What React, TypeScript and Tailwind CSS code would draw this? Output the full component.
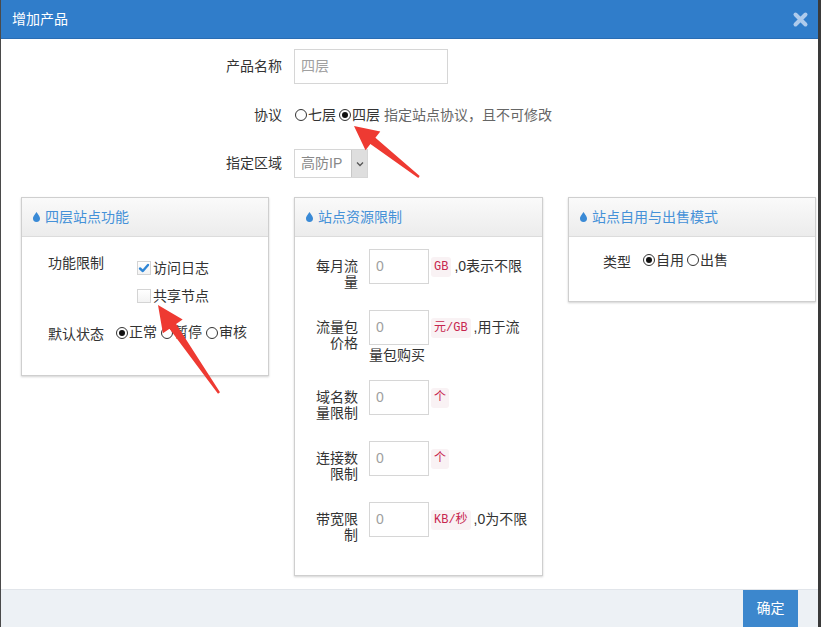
import React from "react";

const Drop = () => (
  <svg width="7" height="10" viewBox="0 0 10 14" className="shrink-0">
    <path d="M5 0 C4 2 0 6 0 9.2 a5 4.8 0 0 0 10 0 C10 6 6 2 5 0Z" fill="#3a8ad6" />
  </svg>
);

const Radio = ({ checked, label }: { checked?: boolean; label: string }) => (
  <span className="inline-flex items-center">
    <span className="w-[12px] h-[12px] rounded-full border border-[#333] bg-white flex items-center justify-center mr-[1px]">
      {checked && <span className="w-[6px] h-[6px] rounded-full bg-[#111]" />}
    </span>
    <span>{label}</span>
  </span>
);

const Check = ({ checked, label }: { checked?: boolean; label: string }) => (
  <div className="flex items-center h-[20px]">
    <span className="w-[14px] h-[14px] border border-[#d4d4d4] bg-gradient-to-b from-white to-[#f3f3f3] flex items-center justify-center mr-[2px]">
      {checked && (
        <svg width="12" height="12" viewBox="0 0 12 12">
          <path d="M2 6.5 L4.8 9 L10 3" stroke="#2f86d6" strokeWidth="2.4" fill="none" strokeLinecap="round" strokeLinejoin="round" />
        </svg>
      )}
    </span>
    <span>{label}</span>
  </div>
);

const Code = ({ children }: { children: React.ReactNode }) => (
  <span className="ml-[2px] mr-[3px] bg-[#f9f2f4] text-[#c7254e] text-[12px] px-[3px] py-[1px] rounded-[3px] font-['Liberation_Mono','Noto_Sans_CJK_SC',monospace]">
    {children}
  </span>
);

const Panel = ({ title, w, children }: { title: string; w: string; children: React.ReactNode }) => (
  <div className={`${w} border border-[#cfcfcf] bg-white shadow-[0_1px_2px_rgba(0,0,0,0.18)]`}>
    <div className="h-[39px] border-b border-[#dcdcdc] bg-gradient-to-b from-[#fafafa] to-[#ececec] flex items-center pl-[11px] gap-[5px] text-[#4591d8]">
      <Drop />
      <span>{title}</span>
    </div>
    {children}
  </div>
);

const Input = ({ w, text }: { w: string; text: string }) => (
  <div className={`${w} h-[35px] border border-[#d6d6d6] bg-white flex items-center pl-[6px] text-[#a0a0a0] shrink-0`}>{text}</div>
);

const Row = ({ label, children, mb }: { label: React.ReactNode; children: React.ReactNode; mb: string }) => (
  <div className={`flex items-start ${mb}`}>
    <div className="w-[63px] text-right leading-[16px] pt-[9px]">{label}</div>
    <div className="ml-[11px]">{children}</div>
  </div>
);

export default function App() {
  return (
    <div className="relative w-[821px] h-[627px] overflow-hidden bg-white flex flex-col border-l border-l-[#4a4a4a] border-r-[3px] border-r-[#3a3a3a] text-[14px] text-[#333] font-['Liberation_Sans','Noto_Sans_CJK_SC',sans-serif]">
      <div className="h-[39px] shrink-0 bg-[#307dca] border-b border-[#2a6db3] flex items-center justify-between pl-[11px] pr-[9px]">
        <span className="text-white text-[14px]">增加产品</span>
        <svg width="17" height="17" viewBox="0 0 17 17">
          <path d="M3.5 3.5 L13.5 13.5 M13.5 3.5 L3.5 13.5" stroke="#aecbec" strokeWidth="4" strokeLinecap="round" />
        </svg>
      </div>

      <div className="flex-1 bg-white pt-[10px]">
        <div className="flex items-center">
          <div className="w-[281px] text-right">产品名称</div>
          <div className="ml-[12px]">
            <Input w="w-[154px]" text="四层" />
          </div>
        </div>
        <div className="flex items-center mt-[21px] h-[20px]">
          <div className="w-[281px] text-right">协议</div>
          <div className="ml-[13px] flex items-center gap-[3px]">
            <Radio label="七层" />
            <Radio checked label="四层" />
            <span className="ml-[1px] text-[#666]">指定站点协议，且不可修改</span>
          </div>
        </div>
        <div className="flex items-center mt-[24px]">
          <div className="w-[281px] text-right">指定区域</div>
          <div className="ml-[12px] flex h-[29px] w-[74px] border border-[#d6d6d6]">
            <div className="flex-1 flex items-center pl-[6px] text-[#888]">高防IP</div>
            <div className="w-[16px] bg-[#dedede] border-l border-[#c8c8c8] flex items-center justify-center">
              <svg width="8" height="6" viewBox="0 0 8 6">
                <path d="M1 1.5 L4 4.5 L7 1.5" stroke="#555" strokeWidth="1.3" fill="none" />
              </svg>
            </div>
          </div>
        </div>

        <div className="flex items-start gap-[25px] pl-[20px] mt-[19px]">
          <Panel title="四层站点功能" w="w-[248px]">
            <div className="pl-[26px] pt-[16px] pb-[31px]">
              <div className="flex items-start">
                <div className="w-[89px] leading-[20px]">功能限制</div>
                <div className="flex flex-col gap-[8px] mt-[5px]">
                  <Check checked label="访问日志" />
                  <Check label="共享节点" />
                </div>
              </div>
              <div className="flex items-center mt-[18px] h-[20px]">
                <div className="w-[68px]">默认状态</div>
                <div className="flex items-center gap-[4px] -mt-[3px]">
                  <Radio checked label="正常" />
                  <Radio label="暂停" />
                  <Radio label="审核" />
                </div>
              </div>
            </div>
          </Panel>

          <Panel title="站点资源限制" w="w-[249px]">
            <div className="pt-[12px] pb-[32px]">
              <Row mb="mb-[20px]" label={<>每月流<br />量</>}>
                <div className="flex items-center">
                  <Input w="w-[60px]" text="0" />
                  <Code>GB</Code>
                  <span>,0表示不限</span>
                </div>
              </Row>
              <Row mb="mb-[16px]" label={<>流量包<br />价格</>}>
                <div className="flex items-center">
                  <Input w="w-[60px]" text="0" />
                  <Code>元/GB</Code>
                  <span>,用于流</span>
                </div>
                <div className="leading-[18px] mt-[1px]">量包购买</div>
              </Row>
              <Row mb="mb-[20px]" label={<>域名数<br />量限制</>}>
                <div className="flex items-center">
                  <Input w="w-[60px]" text="0" />
                  <Code>个</Code>
                </div>
              </Row>
              <Row mb="mb-[20px]" label={<>连接数<br />限制</>}>
                <div className="flex items-center">
                  <Input w="w-[60px]" text="0" />
                  <Code>个</Code>
                </div>
              </Row>
              <Row mb="mb-0" label={<>带宽限<br />制</>}>
                <div className="flex items-center">
                  <Input w="w-[60px]" text="0" />
                  <Code>KB/秒</Code>
                  <span>,0为不限</span>
                </div>
              </Row>
            </div>
          </Panel>

          <Panel title="站点自用与出售模式" w="w-[248px]">
            <div className="pl-[34px] pt-[15px] pb-[29px]">
              <div className="flex items-center h-[20px]">
                <div className="w-[40px]">类型</div>
                <div className="flex items-center gap-[3px] -mt-[4px]">
                  <Radio checked label="自用" />
                  <Radio label="出售" />
                </div>
              </div>
            </div>
          </Panel>
        </div>
      </div>

      <div className="h-[38px] shrink-0 bg-[#edf1f5] border-t border-[#e1e5ea] flex justify-end pr-[20px]">
        <div className="w-[55px] h-full bg-[#3c87cd] text-white flex items-center justify-center">确定</div>
      </div>

      <svg className="absolute left-0 top-0 pointer-events-none" width="821" height="627" viewBox="0 0 821 627">
        <polygon
          points="353,126 379.3,131.4 374.4,137.7 418.7,176.1 417.3,177.9 369.4,143.9 364.5,150.2"
          fill="#ee3a32"
        />
        <polygon
          points="157,305 181.7,319.6 175.1,324.1 219,392.3 217,393.7 168.5,328.7 161.9,333.2"
          fill="#ee3a32"
        />
      </svg>
    </div>
  );
}
